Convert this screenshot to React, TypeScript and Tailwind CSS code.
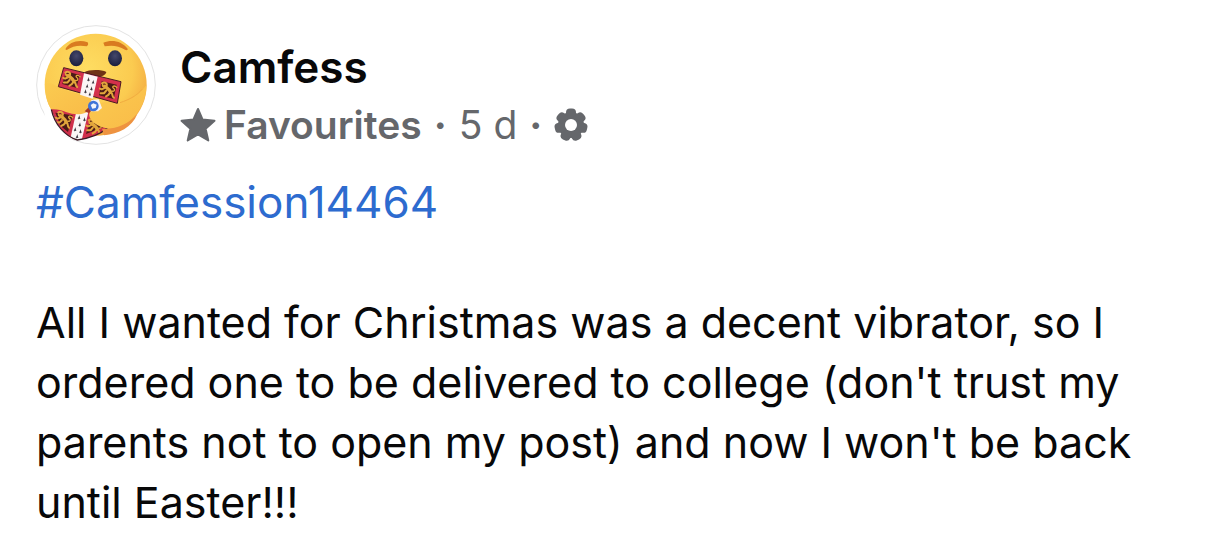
import type { ReactNode } from 'react';

function Lion({ transform }: { transform: string }) {
    return (
        <g transform={transform} fill="none" stroke="#e2a63c" strokeWidth="6" strokeLinecap="round" strokeLinejoin="round">
            <path d="M-22 -17 C-16 -24 -6 -21 -7 -13 C-9 -6 -18 -7 -19 -12" />
            <path d="M-12 -10 C-4 -6 4 -4 9 4" strokeWidth="10" />
            <path d="M-12 -4 L-19 1 L-25 0 M-5 2 L-10 11 L-20 13 M8 4 L4 13 L-2 19 M11 5 C18 8 14 15 22 18" />
            <path d="M12 0 C22 0 20 -9 14 -10 C8 -14 16 -20 24 -14" strokeWidth="4" />
        </g>
    );
}

function Ermine({ x, y }: { x: number; y: number }) {
    return (
        <path
            transform={`translate(${x} ${y})`}
            d="M1 -7 C2 -2 3 2 4 5 L1 4 L-1 7 L-1 4 L-4 4 C-2 1 0 -2 1 -7 Z"
            fill="#38333c"
        />
    );
}

function Avatar() {
    return (
        <svg viewBox="18 15 360 360" className="size-30 shrink-0" role="img" aria-label="Camfess">
            <defs>
                <radialGradient id="face" cx="42%" cy="35%" r="68%">
                    <stop offset="0" stopColor="#fedd62" />
                    <stop offset="0.65" stopColor="#fbcb50" />
                    <stop offset="1" stopColor="#f2a63f" />
                </radialGradient>
                <linearGradient id="arm" x1="0" y1="0" x2="1" y2="1">
                    <stop offset="0" stopColor="#fbcb50" />
                    <stop offset="1" stopColor="#f9bb48" />
                </linearGradient>
                <radialGradient id="eye" cx="50%" cy="35%" r="60%">
                    <stop offset="0" stopColor="#44486b" />
                    <stop offset="1" stopColor="#1d2140" />
                </radialGradient>
                <clipPath id="shield">
                    <path d="M62 258 L190 270 L232 324 C212 342 176 356 142 361 C108 350 76 318 62 258 Z" />
                </clipPath>
            </defs>
            <circle cx="198" cy="195" r="178" fill="#fff" stroke="#e3e3e3" strokeWidth="3" />
            <circle cx="197" cy="194" r="153" fill="url(#face)" />
            <path d="M66 274 L142 364 L110 350 L50 320 L40 260 Z" fill="#fff" />
            <path d="M106 88 C118 64 148 58 173 67 C176 72 174 77 170 79 C148 74 128 78 110 90 Z" fill="#d97b20" />
            <path d="M220 68 C244 58 276 62 294 88 C292 91 288 91 285 89 C266 77 246 75 224 79 Z" fill="#d97b20" />
            <ellipse cx="139" cy="115" rx="21" ry="24" fill="url(#eye)" />
            <ellipse cx="255" cy="115" rx="21" ry="24" fill="url(#eye)" />
            <path d="M163 157 C176 148 214 148 229 156 C224 176 178 174 163 157 Z" fill="#6f3215" />

            <g clipPath="url(#shield)">
                <path d="M50 250 H250 V365 H50 Z" fill="#cf2f4a" />
                <path d="M76 278 L128 286 L114 336 L92 318 Z M184 290 L220 322 L168 342 Z" fill="#4a1a16" />
                <Lion transform="translate(101 300) rotate(16)" />
                <Lion transform="translate(194 322) rotate(12)" />
                <path d="M140 270 L176 272 L154 365 L122 352 Z" fill="#faf5f5" />
                <Ermine x={147} y={292} />
                <Ermine x={163} y={298} />
                <Ermine x={149} y={314} />
                <Ermine x={135} y={328} />
                <Ermine x={151} y={334} />
                <Ermine x={141} y={349} />
            </g>
            <path d="M64 268 C74 316 108 350 142 360 C176 355 212 342 232 324" fill="none" stroke="#3b1b25" strokeWidth="4" />

            <path d="M46 190 C66 184 78 200 92 204 C120 218 164 222 186 236 C198 252 192 272 172 276 C152 286 130 284 110 277 C94 270 80 267 64 268 C52 250 44 222 46 190 Z" fill="url(#arm)" />
            <path d="M349 194 C336 218 300 236 270 250 C240 246 214 242 202 256 C180 272 170 282 184 300 C198 320 232 330 262 324 C316 304 350 250 349 194 Z" fill="url(#arm)" />
            <path d="M216 326 C256 330 296 312 322 282 C306 322 266 342 222 346 Z" fill="#ee9340" />
            <path d="M270 248 C300 238 322 226 336 208" fill="none" stroke="#f1ac40" strokeWidth="3" />

            <path d="M188 238 L176 262 L164 274 L176 279 L192 266 Z" fill="#a53824" />
            <path d="M101 143 L273 185 L262 250 L85 200 Z" fill="#d3304c" stroke="#4b1a22" strokeWidth="3" />
            <path d="M108 154 L150 165 L139 203 L97 192 Z M215 184 L260 194 L251 237 L207 226 Z" fill="#4a1a16" />
            <Lion transform="translate(124 179) rotate(12)" />
            <Lion transform="translate(234 211) rotate(12)" />
            <path d="M162 160 L203 170 L188 236 L150 224 Z" fill="#faf5f5" />
            <Ermine x={175} y={178} />
            <Ermine x={189} y={186} />
            <Ermine x={171} y={198} />
            <Ermine x={184} y={206} />
            <Ermine x={166} y={214} />
            <Ermine x={179} y={222} />
            <path d="M184 240 L206 238 L216 264 L204 274 L182 274 Z" fill="#f5f2f5" />
            <circle cx="190" cy="258" r="16" fill="#3f73d8" />
            <path d="M182 255 L190 250 L200 254 L197 264 L187 266 Z" fill="#f4f4fa" />
        </svg>
    );
}

function Star() {
    return (
        <svg viewBox="0 0 36 36" className="size-9 shrink-0" fill="#65676b" stroke="#65676b" strokeWidth="2" strokeLinejoin="round" aria-hidden="true">
            <path d="M18 2 L22.6 12.6 L34.5 13.8 L25.6 21.8 L28.3 33.5 L18 27.5 L7.7 33.5 L10.4 21.8 L1.5 13.8 L13.4 12.6 Z" />
        </svg>
    );
}

const TEETH = [0, 1, 2, 3, 4, 5, 6];

function Gear() {
    return (
        <svg viewBox="-17 -17 34 34" className="size-[34px]" aria-hidden="true">
            <g fill="#65676b">
                <circle r="13" />
                {TEETH.map((n) => (
                    <rect key={n} x="-5" y="-16.5" width="10" height="11" rx="4" transform={`rotate(${(n * 360) / 7})`} />
                ))}
            </g>
            <circle r="6" fill="#fff" />
        </svg>
    );
}

function Post({ tag, children }: { tag: string; children: ReactNode }) {
    return (
        <div className="mt-[17px] leading-[60px]">
            <a href="#post" className="block w-fit text-[44px] leading-[60px] text-[#2d6bcf]">
                {tag}
            </a>
            <p className="mt-15 text-[43px] leading-[60px] text-[#080809]">{children}</p>
        </div>
    );
}

export default function App() {
    return (
        <article className="bg-white px-9 pt-[25px] font-['Inter',sans-serif]">
            <header className="flex items-start gap-6">
                <Avatar />
                <div className="pt-3.5">
                    <h1 className="text-[44px] leading-[56px] font-semibold text-[#080809]">Camfess</h1>
                    <div className="flex items-center text-[39px] leading-[60px] text-[#65676b]">
                        <Star />
                        <span className="ml-2 font-semibold">Favourites</span>
                        <span className="mx-3 font-bold">·</span>
                        <span>5 d</span>
                        <span className="mx-3 font-bold">·</span>
                        <button type="button" aria-label="Audience settings">
                            <Gear />
                        </button>
                    </div>
                </div>
            </header>
            <Post tag="#Camfession14464">
                All I wanted for Christmas was a decent vibrator, so I ordered one to be delivered to college (don't trust my
                parents not to open my post) and now I won't be back until Easter!!!
            </Post>
        </article>
    );
}
